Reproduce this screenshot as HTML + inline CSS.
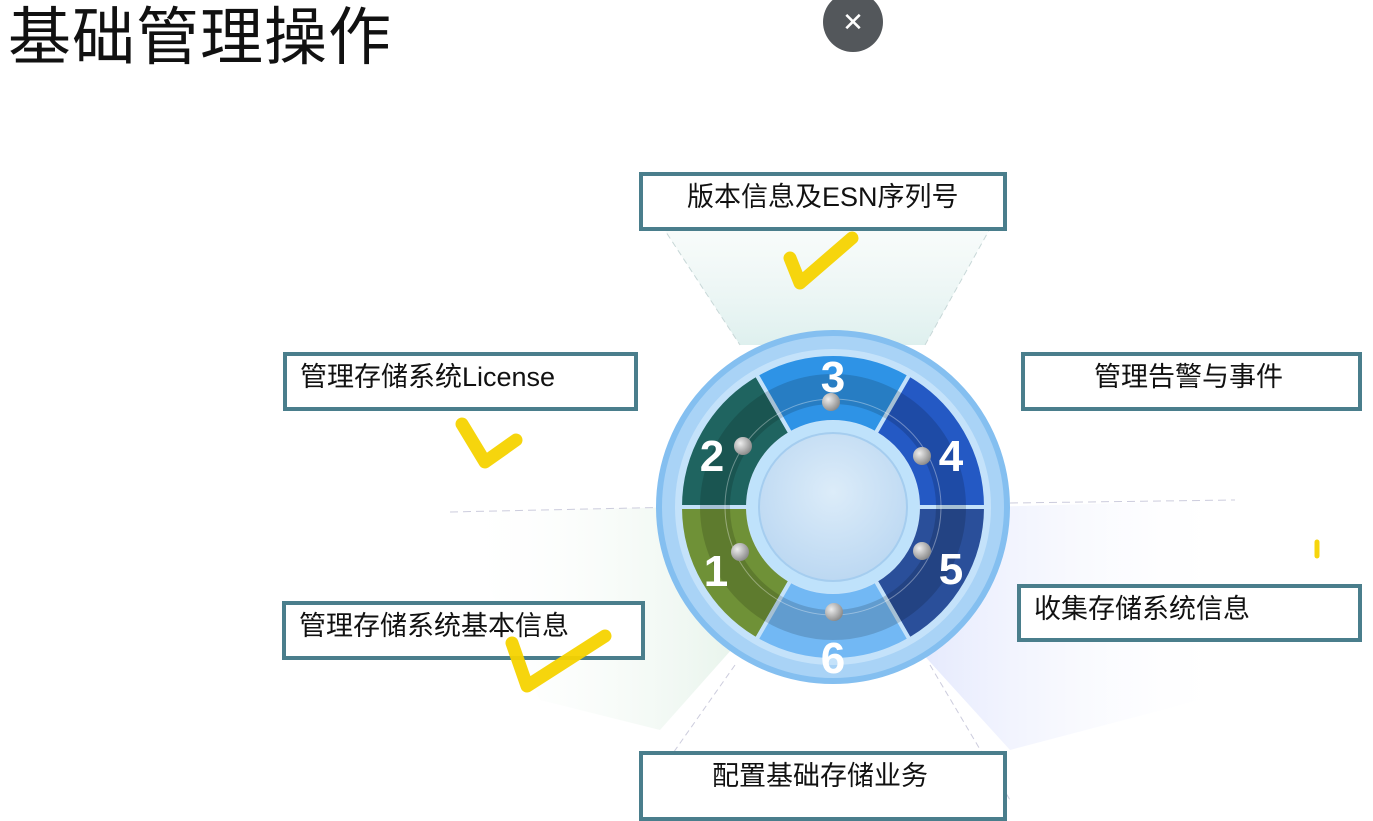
<!DOCTYPE html>
<html><head><meta charset="utf-8"><style>
html,body{margin:0;padding:0;width:1373px;height:810px;overflow:hidden;background:#fff;font-family:"Liberation Sans","Noto Sans CJK SC",sans-serif;}
.t{position:absolute;left:8px;top:-13px;font-size:63px;color:#111;letter-spacing:1px;}
.b{position:absolute;box-sizing:border-box;border:4px solid #4a7e8c;background:#fff;font-size:27px;color:#111;line-height:42px;white-space:nowrap;}
.x{position:absolute;left:823px;top:-8px;width:60px;height:60px;border-radius:50%;background:#53575b;color:#fff;font-size:26px;text-align:center;line-height:60px;}
svg{position:absolute;left:0;top:0}
</style></head><body>
<svg width="1373" height="810">
<defs>
<linearGradient id="gc" x1="0" y1="0" x2="0" y2="1"><stop offset="0" stop-color="#eef6f3" stop-opacity=".2"/><stop offset="1" stop-color="#d6ecea" stop-opacity=".8"/></linearGradient>
<linearGradient id="gl" x1="0" y1="0" x2="1" y2="0"><stop offset="0" stop-color="#fff" stop-opacity="0"/><stop offset="1" stop-color="#d8ecde"/></linearGradient>
<linearGradient id="gr" x1="1" y1="0" x2="0" y2="0"><stop offset="0" stop-color="#fff" stop-opacity="0"/><stop offset="1" stop-color="#d0d8fb"/></linearGradient>
<radialGradient id="gd" cx=".5" cy=".4" r=".6"><stop offset="0" stop-color="#dcecf9"/><stop offset="1" stop-color="#bcd8f2"/></radialGradient>
<radialGradient id="ball" cx=".35" cy=".35" r=".7"><stop offset="0" stop-color="#eee"/><stop offset="1" stop-color="#888"/></radialGradient>
</defs>
<polygon points="645,200 1006,200 925,345 740,345" fill="url(#gc)"/>
<polygon points="455,512 680,507 740,640 660,730 540,700" fill="url(#gl)" opacity=".6"/>
<polygon points="986,507 1235,500 1200,700 1010,750 910,640" fill="url(#gr)" opacity=".6"/>
<line x1="645" y1="200" x2="740" y2="345" stroke="#c8d8d8" stroke-dasharray="6,4"/>
<line x1="1006" y1="200" x2="925" y2="345" stroke="#c8d8d8" stroke-dasharray="6,4"/>
<line x1="450" y1="512" x2="680" y2="507" stroke="#ccd" stroke-dasharray="8,5"/>
<line x1="1010" y1="503" x2="1235" y2="500" stroke="#ccd" stroke-dasharray="8,5"/>
<line x1="735" y1="665" x2="640" y2="800" stroke="#ccd" stroke-dasharray="6,4"/>
<line x1="930" y1="665" x2="1010" y2="800" stroke="#ccd" stroke-dasharray="6,4"/>
<circle cx="833" cy="507" r="174" fill="#a9d3f6" stroke="#84bff0" stroke-width="6"/>
<circle cx="833" cy="507" r="158" fill="#c4e2fa"/>
<g stroke="#c4e2fa" stroke-width="4">
<path d="M756.5,639.5 A153 153 0 0 1 680,507 L748,507 A85 85 0 0 0 790.5,580.6Z" fill="#6f9137"/>
<path d="M680,507 A153 153 0 0 1 756.5,374.5 L790.5,433.4 A85 85 0 0 0 748,507Z" fill="#1f6460"/>
<path d="M756.5,374.5 A153 153 0 0 1 909.5,374.5 L875.5,433.4 A85 85 0 0 0 790.5,433.4Z" fill="#2e93e6"/>
<path d="M909.5,374.5 A153 153 0 0 1 986,507 L918,507 A85 85 0 0 0 875.5,433.4Z" fill="#2459c4"/>
<path d="M986,507 A153 153 0 0 1 909.5,639.5 L875.5,580.6 A85 85 0 0 0 918,507Z" fill="#2a4f9a"/>
<path d="M909.5,639.5 A153 153 0 0 1 756.5,639.5 L790.5,580.6 A85 85 0 0 0 875.5,580.6Z" fill="#72b8f4"/>
</g>
<circle cx="833" cy="507" r="118" fill="none" stroke="#000" stroke-opacity=".15" stroke-width="30"/>
<circle cx="833" cy="507" r="108" fill="none" stroke="#fff" stroke-opacity=".35" stroke-width="1"/>
<circle cx="833" cy="507" r="86" fill="#bfe2fb"/>
<circle cx="833" cy="507" r="74" fill="url(#gd)" stroke="#a5cdef" stroke-width="2"/>
<g fill="url(#ball)"><circle cx="740" cy="552" r="9"/><circle cx="743" cy="446" r="9"/><circle cx="831" cy="402" r="9"/><circle cx="922" cy="456" r="9"/><circle cx="922" cy="551" r="9"/><circle cx="834" cy="612" r="9"/></g>
<g fill="#fff" font-family="Liberation Sans" font-weight="bold" font-size="44" text-anchor="middle">
<text x="716" y="586">1</text><text x="712" y="471">2</text><text x="833" y="392">3</text><text x="951" y="471">4</text><text x="951" y="584">5</text><text x="833" y="673">6</text></g>
</svg>
<div class="t">基础管理操作</div>
<div class="x">✕</div>
<div class="b" style="left:639px;top:172px;width:368px;height:59px;padding-left:44px">版本信息及ESN序列号</div>
<div class="b" style="left:283px;top:352px;width:355px;height:59px;padding-left:13px">管理存储系统License</div>
<div class="b" style="left:1021px;top:352px;width:341px;height:59px;padding-left:69px">管理告警与事件</div>
<div class="b" style="left:282px;top:601px;width:363px;height:59px;padding-left:13px">管理存储系统基本信息</div>
<div class="b" style="left:1017px;top:584px;width:345px;height:58px;padding-left:13px">收集存储系统信息</div>
<div class="b" style="left:639px;top:751px;width:368px;height:70px;padding-left:69px">配置基础存储业务</div>
<svg width="1373" height="810" style="pointer-events:none">
<g fill="none" stroke="#f6d300" stroke-width="13" stroke-linecap="round" stroke-linejoin="round" opacity=".95">
<polyline points="790,258 800,283 852,238"/>
<polyline points="462,424 485,462 516,440"/>
<polyline points="512,643 527,686 605,636"/>
<line x1="1317" y1="542" x2="1317" y2="556" stroke-width="5"/>
</g></svg>
</body></html>
